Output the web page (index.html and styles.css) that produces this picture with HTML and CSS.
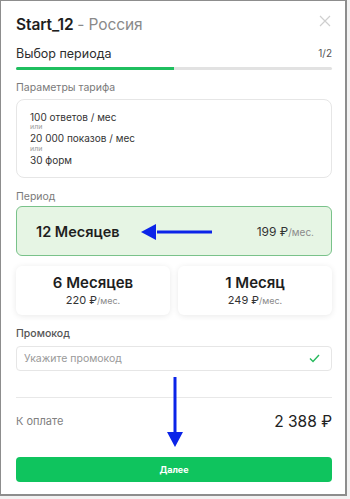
FILE: index.html
```html
<!DOCTYPE html>
<html lang="ru">
<head>
<meta charset="utf-8">
<link rel="stylesheet" href="styles.css">
</head>
<body>
<div class="modal">
  <div class="title-row">
    <h1 class="title">Start_12 <span class="title-sub">- Россия</span></h1>
    <span class="close">
      <svg width="12" height="12" viewBox="0 0 12 12"><path d="M1 1L11 11M11 1L1 11" stroke="#cfcfcf" stroke-width="1.2"/></svg>
    </span>
  </div>
  <div class="step-row">
    <span class="step-name">Выбор периода</span>
    <span class="step-count">1/2</span>
  </div>
  <div class="progress"><div class="progress-fill"></div></div>

  <div class="label">Параметры тарифа</div>
  <div class="params">
    <div class="p-main">100 ответов / мес</div>
    <div class="p-or">или</div>
    <div class="p-main">20 000 показов / мес</div>
    <div class="p-or">или</div>
    <div class="p-main">30 форм</div>
  </div>

  <div class="label label-period">Период</div>
  <div class="period-selected">
    <span class="ps-name">12 Месяцев</span>
    <span class="ps-price">199 ₽<span class="per">/мес.</span></span>
    <svg class="arrow-left" width="72" height="18" viewBox="0 0 72 18"><path d="M16 7.5H71V10.5H16Z" fill="#0b24e8"/><path d="M0 9L15 1V17Z" fill="#0b24e8"/></svg>
  </div>
  <div class="period-row">
    <div class="period-card">
      <div class="pc-name">6 Месяцев</div>
      <div class="pc-price">220 ₽<span class="per">/мес.</span></div>
    </div>
    <div class="period-card">
      <div class="pc-name">1 Месяц</div>
      <div class="pc-price">249 ₽<span class="per">/мес.</span></div>
    </div>
  </div>

  <div class="label label-promo">Промокод</div>
  <div class="promo">
    <span class="promo-ph">Укажите промокод</span>
    <svg width="11" height="9" viewBox="0 0 11 9"><path d="M1 4.5L4 7.5L10 1" fill="none" stroke="#25b95c" stroke-width="1.4"/></svg>
  </div>

  <div class="divider"></div>
  <div class="total-row">
    <span class="total-label">К оплате</span>
    <span class="total-sum">2 388 ₽</span>
  </div>
  <button class="next">Далее</button>
  <svg class="arrow-down" width="18" height="71" viewBox="0 0 18 71"><path d="M7.5 0H10.5V56H7.5Z" fill="#0b24e8"/><path d="M1 55H17L9 70Z" fill="#0b24e8"/></svg>
</div>
</body>
</html>
```
FILE: styles.css
```css
* { box-sizing: border-box; }
html, body { margin: 0; padding: 0; }
body {
  background: #f2f2f2;
  font-family: Inter, "Noto Sans", sans-serif;
  color: #2a2a2a;
  width: 350px;
  height: 499px;
  overflow: hidden;
}
.modal {
  position: relative;
  width: 347px;
  height: 496px;
  background: #fff;
  border: 1px solid #8d8d8d;
  border-width: 1px 2px 2px 1px;
  padding: 13px 13px 0 15px;
  display: flex;
  flex-direction: column;
}
.title-row {
  display: flex;
  justify-content: space-between;
  align-items: flex-start;
  height: 22px;
}
.title {
  margin: 0;
  font-size: 15.5px;
  line-height: 22px;
  font-weight: 600;
  color: #1e1e1e;
  letter-spacing: -0.1px;
}
.title-sub { font-weight: 400; color: #8a8a8a; }
.close { margin-top: 1px; margin-right: 1px; display: flex; }
.step-row {
  margin-top: 8px;
  display: flex;
  justify-content: space-between;
  align-items: center;
  height: 18px;
}
.step-name { font-size: 12.5px; color: #2e2e2e; }
.step-count { font-size: 10px; color: #555; }
.progress {
  margin-top: 5px;
  height: 3px;
  border-radius: 2px;
  background: #e2e2e2;
  overflow: hidden;
}
.progress-fill { width: 50%; height: 100%; background: #1fbf5f; }
.label {
  margin-top: 11px;
  font-size: 10.5px;
  line-height: 14px;
  color: #7a7a7a;
}
.params {
  margin-top: 4px;
  height: 79px;
  border: 1px solid #e6e6e6;
  border-radius: 8px;
  padding: 11px 13px;
  display: flex;
  flex-direction: column;
  justify-content: center;
}
.p-main { font-size: 10px; line-height: 10.75px; color: #333; }
.p-or { font-size: 7px; line-height: 10.75px; color: #9a9a9a; }
.label-period { margin-top: 12px; }
.period-selected {
  position: relative;
  margin-top: 2px;
  height: 50px;
  background: #e6f5e4;
  border: 1px solid #79c28a;
  border-radius: 6px;
  display: flex;
  justify-content: space-between;
  align-items: center;
  padding: 0 17px 0 19px;
}
.ps-name { font-size: 14.5px; font-weight: 600; color: #1e1e1e; }
.ps-price { font-size: 12px; color: #333; }
.per { font-size: 10px; color: #8a8a8a; }
.arrow-left { position: absolute; left: 124px; top: 16px; }
.period-row {
  margin-top: 10px;
  display: grid;
  grid-template-columns: 1fr 1fr;
  gap: 8px;
  height: 49px;
}
.period-card {
  background: #fff;
  border-radius: 6px;
  box-shadow: 0 1px 6px rgba(0,0,0,0.09);
  display: flex;
  flex-direction: column;
  align-items: center;
  justify-content: center;
  gap: 2px;
}
.pc-name { font-size: 15px; font-weight: 600; line-height: 18px; color: #1e1e1e; }
.pc-price { font-size: 11px; line-height: 13px; color: #333; }
.pc-price .per { font-size: 9px; }
.label-promo { margin-top: 12px; color: #555; font-weight: 500; }
.promo {
  margin-top: 5px;
  height: 25px;
  border: 1px solid #e6e6e6;
  border-radius: 4px;
  display: flex;
  justify-content: space-between;
  align-items: center;
  padding: 0 11px 0 7px;
}
.promo-ph { font-size: 10.5px; color: #999; }
.divider { margin-top: 26px; height: 1px; background: #e8e8e8; }
.total-row {
  margin-top: 13px;
  height: 20px;
  display: flex;
  justify-content: space-between;
  align-items: center;
}
.total-label { font-size: 11px; color: #808080; }
.total-sum { font-size: 15.5px; color: #222; }
.next {
  margin-top: 26px;
  height: 25px;
  border: 0;
  border-radius: 4px;
  background: #0fc45e;
  color: #fff;
  font-family: Inter, "Noto Sans", sans-serif;
  font-size: 9px;
  font-weight: 700;
}
.arrow-down { position: absolute; left: 165px; top: 376px; }
```
